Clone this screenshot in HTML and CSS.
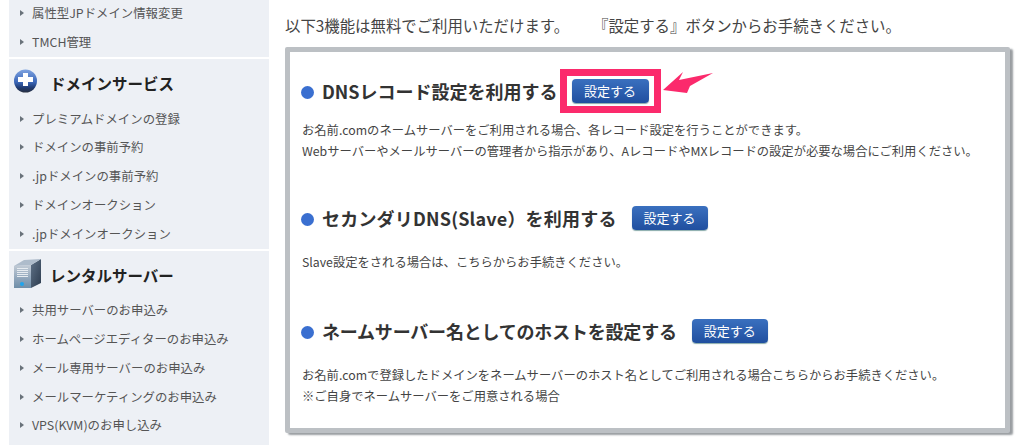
FILE: index.html
```html
<!DOCTYPE html>
<html lang="ja">
<head>
<meta charset="utf-8">
<title>DNS</title>
<link rel="stylesheet" href="styles.css">
</head>
<body>
<div class="page">
  <aside class="side">
    <ul class="menu first">
      <li>属性型JPドメイン情報変更</li>
      <li>TMCH管理</li>
    </ul>
    <section class="group">
      <h2 class="group-head">
        <svg class="ic" viewBox="0 0 27 24" width="27" height="24"><defs><linearGradient id="g" x1="0" y1="0" x2="0" y2="1"><stop offset="0" stop-color="#7fa3e0"/><stop offset=".55" stop-color="#3a66b8"/><stop offset=".8" stop-color="#1f3a70"/><stop offset="1" stop-color="#2a3140"/></linearGradient></defs><circle cx="11.500" cy="12" r="11.500" fill="url(#g)"/><path d="M9 4h5v4h5v5h-5v4H9v-4H4V8h5z" fill="#fff"/></svg>
        ドメインサービス
      </h2>
      <ul class="menu">
        <li>プレミアムドメインの登録</li>
        <li>ドメインの事前予約</li>
        <li>.jpドメインの事前予約</li>
        <li>ドメインオークション</li>
        <li>.jpドメインオークション</li>
      </ul>
    </section>
    <section class="group last">
      <h2 class="group-head">
        <svg class="ic" viewBox="0 0 27 29" width="27" height="29"><defs><linearGradient id="f" x1="0" y1="0" x2="0" y2="1"><stop offset="0" stop-color="#c3ccd6"/><stop offset=".6" stop-color="#8ea4ba"/><stop offset="1" stop-color="#6f8ea8"/></linearGradient><linearGradient id="s" x1="0" y1="0" x2="1" y2="1"><stop offset="0" stop-color="#5e7186"/><stop offset="1" stop-color="#2d3c4f"/></linearGradient></defs><path d="M0 7 17 6v23H0z" fill="url(#f)"/><path d="M17 6 27 0v24l-10 5z" fill="url(#s)"/><path d="M0 7 10 1 27 0 17 6z" fill="#aebccb"/><path d="M3 9.500h11M3 11.500h11M3 13.500h11M3 15.500h11M3 17.500h11" stroke="#e6ebf0" stroke-width="1"/><circle cx="8" cy="25" r="2" fill="#1fa5ee"/></svg>
        レンタルサーバー
      </h2>
      <ul class="menu">
        <li>共用サーバーのお申込み</li>
        <li>ホームページエディターのお申込み</li>
        <li>メール専用サーバーのお申込み</li>
        <li>メールマーケティングのお申込み</li>
        <li>VPS(KVM)のお申し込み</li>
      </ul>
    </section>
  </aside>
  <main class="main">
    <p class="intro">以下3機能は無料でご利用いただけます。<span class="gap"></span>『設定する』ボタンからお手続きください。</p>
    <div class="panel">
      <section class="item one">
        <div class="item-head">
          <h3>DNSレコード設定を利用する</h3>
          <span class="mark"><a class="btn">設定する</a>
            <svg class="arrow" viewBox="0 0 50 21" width="50" height="21"><path d="M0 18 20 0l-4 8L50 1 27 14l-3 7z" fill="#fb2a6c"/></svg>
          </span>
        </div>
        <p>お名前.comのネームサーバーをご利用される場合、各レコード設定を行うことができます。<br>Webサーバーやメールサーバーの管理者から指示があり、AレコードやMXレコードの設定が必要な場合にご利用ください。</p>
      </section>
      <section class="item two">
        <div class="item-head">
          <h3>セカンダリDNS(Slave）を利用する</h3>
          <a class="btn">設定する</a>
        </div>
        <p>Slave設定をされる場合は、こちらからお手続きください。</p>
      </section>
      <section class="item three">
        <div class="item-head">
          <h3>ネームサーバー名としてのホストを設定する</h3>
          <a class="btn">設定する</a>
        </div>
        <p>お名前.comで登録したドメインをネームサーバーのホスト名としてご利用される場合こちらからお手続きください。<br>※ご自身でネームサーバーをご用意される場合</p>
      </section>
    </div>
  </main>
</div>
</body>
</html>
```
FILE: styles.css
```css
* { box-sizing: border-box; }
html, body { margin: 0; height: 445px; overflow: hidden; background: #fff; }
body { font-family: "Noto Sans CJK JP", "Noto Sans", sans-serif; color: #333; }
.page { display: flex; align-items: flex-start; }
.side { width: 260px; margin-left: 9px; flex: none; display: flex; flex-direction: column; gap: 2px; }
.menu { list-style: none; margin: 0; padding: 0; }
.menu li { height: 28.750px; line-height: 28.750px; padding-left: 23px; font-size: 12.400px; color: #555; position: relative; white-space: nowrap; }
.menu li::before { content: ""; position: absolute; left: 11px; top: 11px; border-left: 4px solid #69727a; border-top: 3px solid transparent; border-bottom: 3px solid transparent; }
.first { background: #edf0f5; height: 57px; }
.first li:first-child { margin-top: -1px; }
.group { background: #edf0f5; }
.group-head { margin: 0; height: 45.500px; padding: 2px 0 0 5px; display: flex; align-items: center; gap: 9px; font-size: 15.500px; font-weight: 700; color: #222; }
.group .menu { padding-bottom: .500px; }
.last .menu { padding-bottom: 6px; }
.ic { flex: none; margin-top: -3px; }
.main { margin-left: 16px; width: 725px; }
.intro { margin: 14px 0 0; font-size: 15.400px; line-height: 22px; color: #444; white-space: nowrap; }
.gap { display: inline-block; width: 24px; }
.panel { margin-top: 11px; height: 386px; border: 5px solid #bcc0c4; background: #fff; box-shadow: 3px 2px 2px #999da1; border-radius: 2px; padding: 0 12px; }
.item p { margin: 0; font-size: 12.300px; line-height: 20.500px; color: #444; white-space: nowrap; }
.item-head { display: flex; align-items: center; }
.item-head h3 { margin: 0; font-size: 18px; line-height: 24px; font-weight: 700; color: #333; white-space: nowrap; padding-left: 20px; position: relative; }
.item-head h3::before { content: ""; position: absolute; left: -1px; top: 50%; margin-top: -5px; width: 13px; height: 13px; border-radius: 50%; background: #3a6fd0; }
.btn { display: inline-block; width: 77px; height: 24px; line-height: 24px; border-radius: 4px; text-align: center; font-size: 13px; color: #fff; background: linear-gradient(#3a70bf, #204f9f); box-shadow: 0 1px 1px #8aa; }
.item-head > .btn { margin-left: 15px; width: 76px; }
.mark { position: relative; margin-left: 2px; border: 7px solid #fb2a6c; padding: 3px 5px; display: block; line-height: 0; }
.arrow { position: absolute; left: 100%; top: -4px; margin-left: 9px; }
.one { padding-top: 17px; }
.one p { margin-top: 7px; }
.two { padding-top: 45px; }
.two h3 { letter-spacing: .2px; }
.two p { margin-top: 22px; }
.three { padding-top: 46.500px; }
.three h3 { letter-spacing: -.2px; }
.three p { margin-top: 22px; }
```
